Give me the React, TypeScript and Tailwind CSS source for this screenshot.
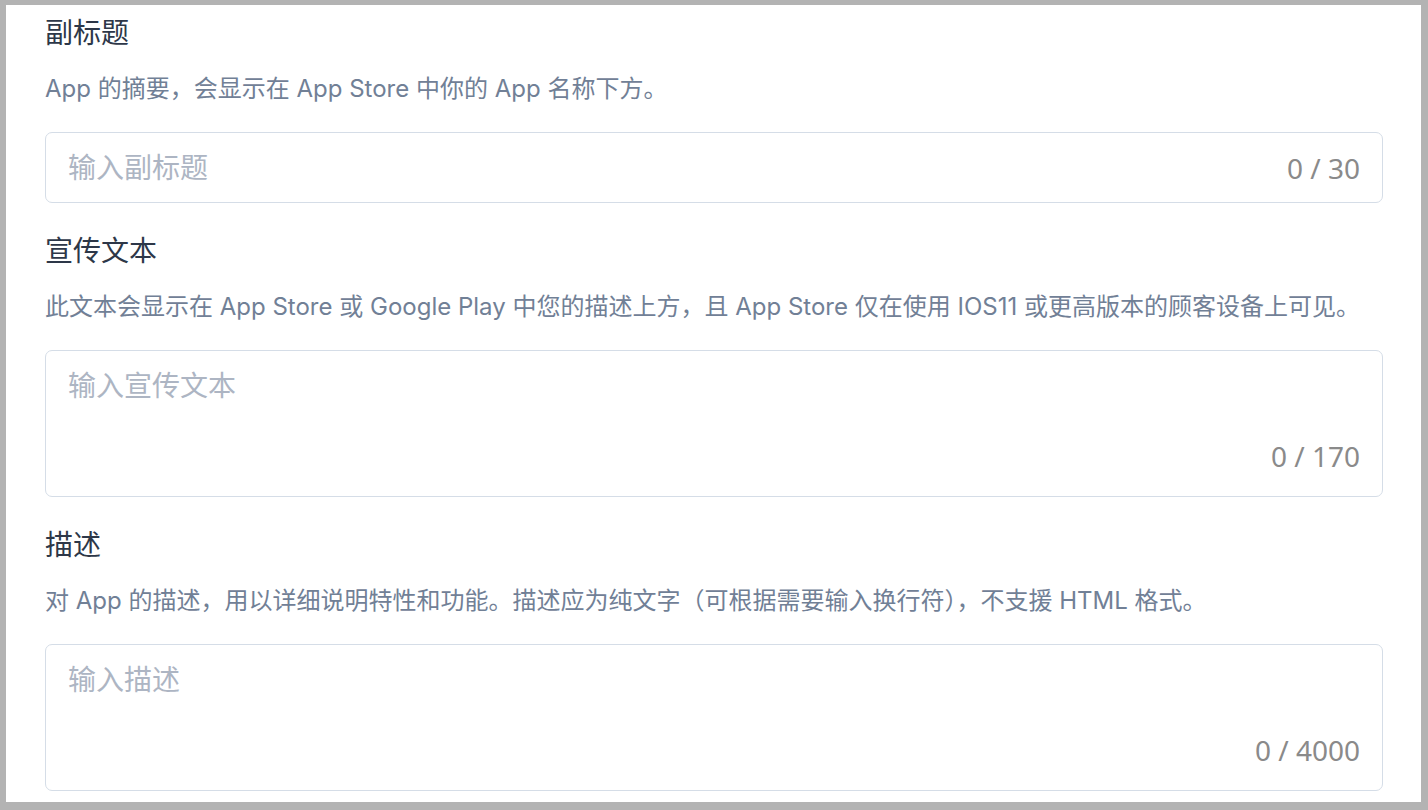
import { useState } from 'react'

const FONT = "font-['Inter','Noto_Sans_CJK_SC',sans-serif]"

type Field = {
  title: string
  desc: string
  placeholder: string
  max: number
  multiline?: boolean
}

const FIELDS: Field[] = [
  {
    title: '副标题',
    desc: 'App 的摘要，会显示在 App Store 中你的 App 名称下方。',
    placeholder: '输入副标题',
    max: 30,
  },
  {
    title: '宣传文本',
    desc: '此文本会显示在 App Store 或 Google Play 中您的描述上方，且 App Store 仅在使用 IOS11 或更高版本的顾客设备上可见。',
    placeholder: '输入宣传文本',
    max: 170,
    multiline: true,
  },
  {
    title: '描述',
    desc: '对 App 的描述，用以详细说明特性和功能。描述应为纯文字（可根据需要输入换行符），不支援 HTML 格式。',
    placeholder: '输入描述',
    max: 4000,
    multiline: true,
  },
]

function Counter({ n, max }: { n: number; max: number }) {
  return (
    <span className="shrink-0 font-['Noto_Sans',sans-serif] text-[28px] leading-[40px] text-[#8a8a8a]">
      {n} / {max}
    </span>
  )
}

function FieldBlock({ f }: { f: Field }) {
  const [value, setValue] = useState('')

  return (
    <section className="flex flex-col">
      <h2 className="text-[28px] leading-[40px] font-normal text-[#2d3748]">{f.title}</h2>
      <p className="mt-[18px] text-[24px] leading-[36px] text-[#718096] whitespace-nowrap">{f.desc}</p>

      {f.multiline ? (
        <div className="mt-[25px] flex h-[147px] flex-col rounded-[7px] border border-[#d5dde7] bg-white pt-[15px] pb-[20px] pl-[22px] pr-[22px]">
          <textarea
            value={value}
            maxLength={f.max}
            onChange={e => setValue(e.target.value)}
            placeholder={f.placeholder}
            className={`${FONT} flex-1 resize-none bg-transparent text-[28px] leading-[40px] text-[#2d3748] outline-none placeholder:text-[#adb5c3]`}
          />
          <div className="flex justify-end">
            <Counter n={value.length} max={f.max} />
          </div>
        </div>
      ) : (
        <div className="mt-[25px] flex h-[71px] items-center gap-4 rounded-[7px] border border-[#d5dde7] bg-white pl-[22px] pr-[22px]">
          <input
            value={value}
            maxLength={f.max}
            onChange={e => setValue(e.target.value)}
            placeholder={f.placeholder}
            className={`${FONT} min-w-0 flex-1 bg-transparent text-[28px] leading-[40px] text-[#2d3748] outline-none placeholder:text-[#adb5c3]`}
          />
          <Counter n={value.length} max={f.max} />
        </div>
      )}
    </section>
  )
}

export default function App() {
  return (
    <div className={`${FONT} h-screen w-screen bg-[#b3b3b3] pt-[5px] pl-[6px] pr-[7px] pb-[8px]`}>
      <div className="h-full overflow-hidden bg-white pt-[8px] pl-[39px] pr-[38px]">
        <div className="flex flex-col gap-[28px]">
          {FIELDS.map(f => (
            <FieldBlock key={f.title} f={f} />
          ))}
        </div>
      </div>
    </div>
  )
}
